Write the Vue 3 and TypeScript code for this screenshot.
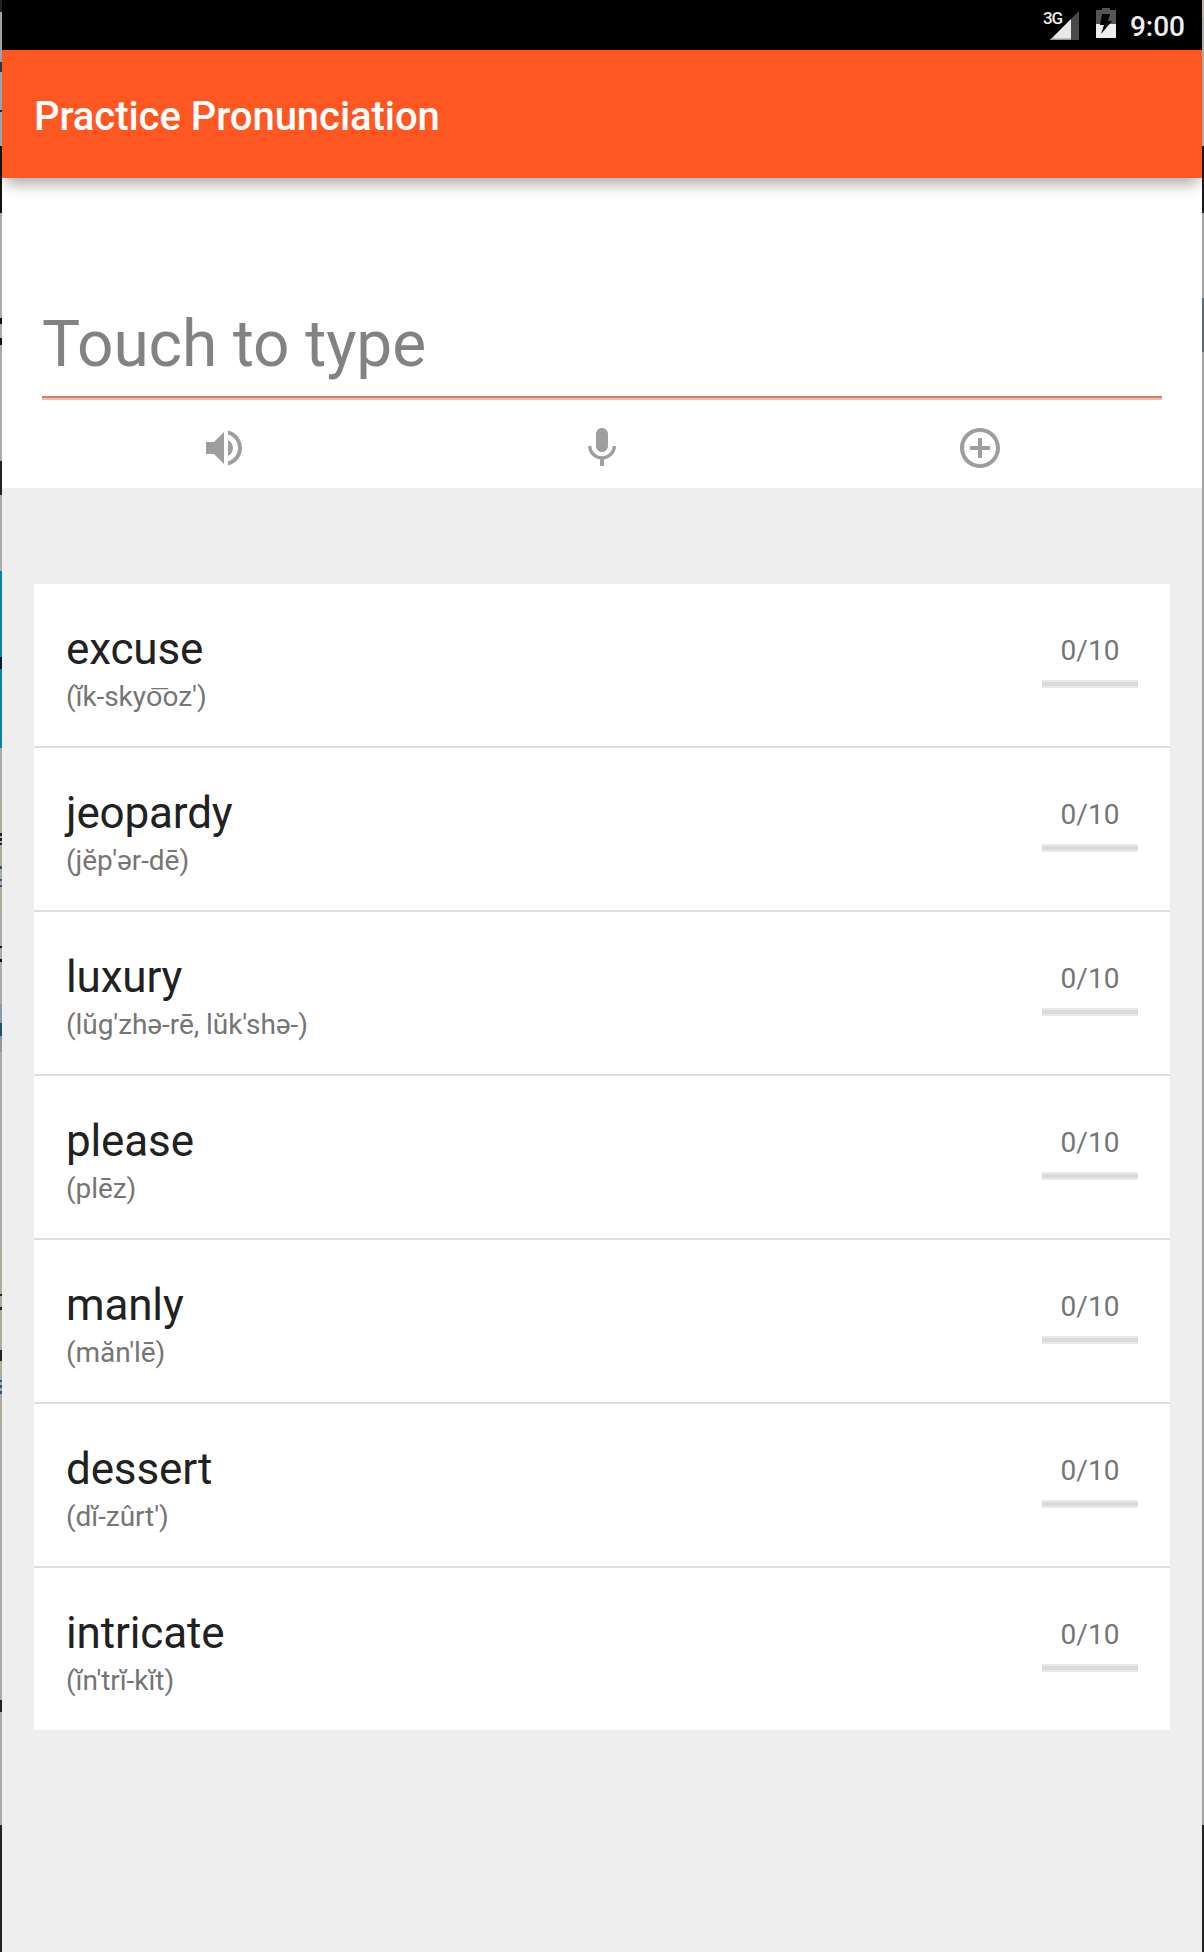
<script setup lang="ts">
interface Word {
  text: string
  phonetic: string
  score: number
}

const goal = 10

const words: Word[] = [
  { text: 'excuse', phonetic: "(ĭk-skyo͞oz')", score: 0 },
  { text: 'jeopardy', phonetic: "(jĕp'ər-dē)", score: 0 },
  { text: 'luxury', phonetic: "(lŭg'zhə-rē, lŭk'shə-)", score: 0 },
  { text: 'please', phonetic: '(plēz)', score: 0 },
  { text: 'manly', phonetic: "(măn'lē)", score: 0 },
  { text: 'dessert', phonetic: "(dĭ-zûrt')", score: 0 },
  { text: 'intricate', phonetic: "(ĭn'trĭ-kĭt)", score: 0 },
]
</script>

<template>
  <div class="desktop">
    <div class="edge edge-left"></div>
    <div class="screen">
      <header class="status-bar">
        <svg class="signal" width="38" height="32" viewBox="0 0 38 32">
          <path d="M36 1V30H7Z" fill="#4a4a4a" />
          <path d="M28 9V30H7Z" fill="#e8e8e8" />
          <path d="M8 28.500H28V30H7Z" fill="#999" />
        </svg>
        <span class="network">3G</span>
        <svg class="battery" width="20" height="30" viewBox="0 0 20 30">
          <path d="M6 0H14V2H20V16H0V2H6Z" fill="#555" />
          <path d="M0 16H20V30H0Z" fill="#eee" />
          <path d="M6 6H14L12 13H16L5 26L8 17H4Z" fill="#000" />
        </svg>
        <span class="clock">9:00</span>
      </header>

      <div class="app-bar"><h1>Practice Pronunciation</h1></div>

      <section class="entry">
        <div class="field">Touch to type</div>
        <div class="actions">
          <svg width="48" height="48" viewBox="0 0 24 24">
            <path d="M3 9v6h4l5 5V4L7 9H3zm13.500 3c0-1.770-1.020-3.290-2.500-4.030v8.050c1.480-.73 2.500-2.250 2.500-4.020zM14 3.230v2.060c2.890.86 5 3.540 5 6.710s-2.110 5.850-5 6.710v2.060c4.010-.91 7-4.490 7-8.770s-2.990-7.860-7-8.770z" />
          </svg>
          <svg width="48" height="48" viewBox="0 0 24 24">
            <path d="M12 14c1.660 0 2.990-1.340 2.990-3L15 5c0-1.660-1.340-3-3-3S9 3.340 9 5v6c0 1.660 1.340 3 3 3zm5.300-3c0 3-2.540 5.100-5.300 5.100S6.700 14 6.700 11H5c0 3.410 2.720 6.230 6 6.720V21h2v-3.280c3.280-.48 6-3.300 6-6.720h-1.700z" />
          </svg>
          <svg width="48" height="48" viewBox="0 0 24 24">
            <path d="M13 7h-2v4H7v2h4v4h2v-4h4v-2h-4V7zm-1-5C6.480 2 2 6.480 2 12s4.480 10 10 10 10-4.480 10-10S17.520 2 12 2zm0 18c-4.410 0-8-3.590-8-8s3.590-8 8-8 8 3.590 8 8-3.590 8-8 8z" />
          </svg>
        </div>
      </section>

      <ul class="words">
        <li v-for="word in words" :key="word.text">
          <div class="labels">
            <div class="word">{{ word.text }}</div>
            <div class="phonetic">{{ word.phonetic }}</div>
          </div>
          <div class="progress">
            <div class="count">{{ word.score }}/{{ goal }}</div>
            <div class="track"></div>
          </div>
        </li>
      </ul>
    </div>
    <div class="edge edge-right"></div>
  </div>
</template>

<style>
body {
  margin: 0;
}
</style>

<style scoped>
.desktop {
  display: flex;
  width: 1204px;
  height: 1952px;
  overflow: hidden;
  font-family: Roboto, 'Noto Sans', sans-serif;
}
.edge {
  width: 2px;
  flex: none;
}
.edge-left {
  background: linear-gradient(#222 0 12px, #9aa3a8 12px 62px, #333 62px 72px, #9aa3a5 72px 110px, #222 110px 112px, #9aa3a5 112px 146px, #111 146px 213px, #aaa 213px 318px, #111 318px 324px, #aaa 324px 338px, #111 338px 345px, #aaa 345px 461px, #222 461px 495px, #aaa 495px 571px, #0c80ab 571px 657px, #03202b 657px 669px, #0c80ab 669px 748px, #aaa 748px 798px, #b0aa9a 798px 833px, #222 833px 836px, #b0aa9a 836px 838px, #222 838px 841px, #b0aa9a 841px 843px, #222 843px 845px, #b0aa9a 845px 866px, #1d5d96 866px 869px, #b0aa9a 869px 879px, #1d5d96 879px 881px, #b0aa9a 881px 885px, #1d5d96 885px 887px, #b0aa9a 887px 912px, #aaa 912px 946px, #111 946px 948px, #aaa 948px 959px, #111 959px 962px, #aaa 962px 1004px, #8b98a1 1004px 1023px, #1b5172 1023px 1036px, #8b98a1 1036px 1052px, #aaa 1052px 1247px, #b0aa9a 1247px 1294px, #222 1294px 1296px, #b0aa9a 1296px 1307px, #222 1307px 1310px, #b0aa9a 1310px 1350px, #222 1350px 1361px, #b0aa9a 1361px 1380px, #1d5d96 1380px 1382px, #b0aa9a 1382px 1385px, #1d5d96 1385px 1388px, #b0aa9a 1388px 1391px, #1d5d96 1391px 1394px, #b0aa9a 1394px 1431px, #aaa 1431px 1700px, #222 1700px 1712px, #aaa 1712px 1825px, #222 1825px);
}
.edge-right {
  background: linear-gradient(#b8b3a6 0 18px, #aaa 18px 146px, #181818 146px 213px, #a4a4a4 213px 298px, #636970 298px 352px, #a4a4a4 352px 1825px, #222 1825px);
}
.screen {
  display: flex;
  flex-direction: column;
  width: 1200px;
  flex: none;
  background: #eee;
  overflow: hidden;
}
.status-bar {
  display: flex;
  align-items: flex-start;
  position: relative;
  justify-content: flex-end;
  height: 50px;
  flex: none;
  padding-right: 17px;
  box-sizing: border-box;
  background: #000;
  color: #eee;
}
.signal {
  margin: 10px 15px 0 0;
}
.network {
  position: absolute;
  left: 1041px;
  top: 9px;
  font-size: 17px;
  line-height: 18px;
  letter-spacing: -1.2px;
  font-weight: 500;
}
.battery {
  margin: 8px 14px 0 0;
}
.clock {
  font-size: 28px;
  line-height: 54px;
  font-weight: 500;
}
.app-bar {
  display: flex;
  align-items: center;
  height: 128px;
  flex: none;
  padding: 5px 0 0 32px;
  box-sizing: border-box;
  background: #ff5722;
  box-shadow: 0 10px 14px -4px rgba(0, 0, 0, 0.34);
  position: relative;
  z-index: 1;
}
h1 {
  margin: 0;
  font-size: 40px;
  line-height: 48px;
  font-weight: 500;
  letter-spacing: -0.05px;
  color: #fff;
}
.entry {
  height: 310px;
  flex: none;
  background: #fff;
}
.field {
  height: 220px;
  margin: 0 40px;
  padding-top: 129px;
  box-sizing: border-box;
  border-bottom: 2px solid #c98473;
  box-shadow: 0 2px #f9b8a7;
  font-size: 64px;
  line-height: 76px;
  letter-spacing: -0.1px;
  color: #828282;
}
.actions {
  display: grid;
  grid-template-columns: 48px 48px 48px;
  gap: 330px;
  margin: 26px 0 0 198px;
}
.actions svg {
  fill: #9e9e9e;
  display: block;
}
.words {
  display: flex;
  flex-direction: column;
  gap: 2px;
  margin: 96px 32px 0;
  padding: 0;
  list-style: none;
  background: #dedede;
}
li {
  display: flex;
  justify-content: space-between;
  height: 162px;
  padding: 0 32px;
  box-sizing: border-box;
  background: #fff;
}
.labels {
  padding-top: 39px;
}
.word {
  font-size: 44px;
  line-height: 52px;
  letter-spacing: -0.15px;
  color: #212121;
}
.phonetic {
  font-size: 28px;
  line-height: 34px;
  margin-top: 5px;
  letter-spacing: -0.06px;
  color: #757575;
  white-space: nowrap;
}
.progress {
  width: 96px;
  padding-top: 50px;
}
.count {
  font-size: 28px;
  line-height: 34px;
  text-align: center;
  color: #757575;
}
.track {
  height: 4px;
  margin-top: 12px;
  border: solid #e8e8e8;
  border-width: 2px 0;
  background: #dadada;
}
</style>
